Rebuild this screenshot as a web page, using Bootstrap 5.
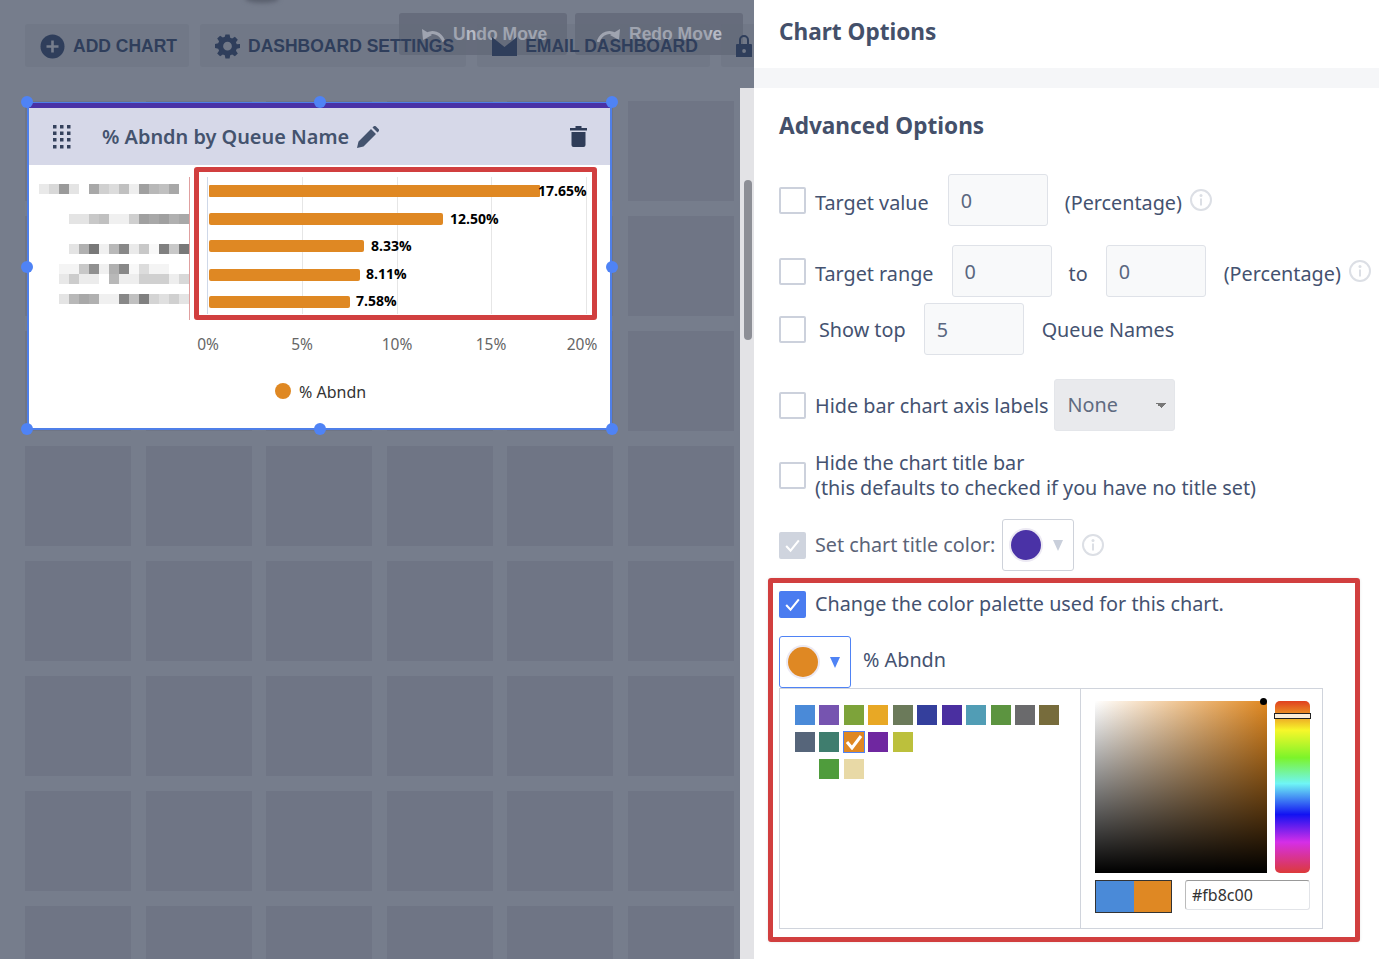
<!DOCTYPE html>
<html lang="en"><head><meta charset="utf-8"><title>Chart Options</title>
<link href="https://cdn.jsdelivr.net/npm/bootstrap@5.3.0/dist/css/bootstrap.min.css" rel="stylesheet">
<style>
html,body{height:959px;overflow:hidden}
body{font-family:"Noto Sans",sans-serif;color:#445270;background:#fff;font-size:19.8px}
.shell{height:959px}
.canvas-dim{width:754px;flex:none;background:#767d8c;position:relative;overflow:hidden}
.cell-grid{display:grid;grid-template-columns:repeat(6,106px);column-gap:14.6px;row-gap:15px;grid-auto-rows:100px;padding:101px 0 0 25px}
.cell-grid>div{background:#6f7585}
.top-smudge{position:absolute;left:245px;top:-6px;width:34px;height:9px;border-radius:50%;background:#5a606e;filter:blur(2px)}
.tool-row{position:absolute;left:25px;top:24px;display:flex;gap:11px;white-space:nowrap}
.tool-btn{height:43px;background:rgba(100,106,122,.28);border-radius:3px;display:flex;align-items:center;gap:8px;padding:1px 12px 0 15px;font:700 17.5px "Liberation Sans",sans-serif;color:#2f3e5b}
.tool-over{position:absolute;top:13px;height:42px;width:168px;background:#666c7c;border-radius:3px;display:flex;align-items:center;gap:8px;padding:0 0 0 22px;font:700 17.5px "Liberation Sans",sans-serif;color:#b6bac5;white-space:nowrap}
.track-side{position:absolute;right:0;top:88px;bottom:0;width:14px;background:#e3e3e6}
.track-thumb{position:absolute;left:4px;top:92px;width:8px;height:160px;border-radius:4px;background:#8d8f96}
.chart-box{position:absolute;left:27px;top:102px;width:585px;height:328px;background:#fff;border:2px solid #4f7fe8;border-top-width:1px}
.title-strip{height:5px;background:#4a32a6}
.chart-head{height:57px;background:#d6d8e8;display:flex;align-items:center;padding:0 23px 0 24px}
.chart-name{font-size:19.9px;font-weight:600;color:#44536e;margin-left:31px;margin-right:8px}
.red-mark{position:absolute;left:165px;top:64px;width:403px;height:153px;border:5px solid #d13f3f;border-radius:3px}
.handle{position:absolute;width:12px;height:12px;border-radius:50%;background:#4f83f5}
.side-panel{flex:1;min-width:0;background:#fff}
.panel-head{height:68px;padding:0 0 5px 25px;display:flex;align-items:center;font-size:22.6px;font-weight:700;color:#44506a}
.panel-gap{height:20px;background:#f5f6f8}
.panel-body{padding-left:25px}
.adv-title{font-size:22.6px;font-weight:700;line-height:32px;margin:22px 0 0;color:#44506a}
.opt-row{display:flex;align-items:center;white-space:nowrap}
.form-check-input.box-check{width:27px;height:27px;margin:0;border:2px solid #ccd1dc;border-radius:2px;flex:none}
.form-check-input.box-check:checked{background-color:#4a7cf0;border-color:#4a7cf0;background-image:url("data:image/svg+xml,%3csvg xmlns='http://www.w3.org/2000/svg' viewBox='0 0 20 20'%3e%3cpath fill='none' stroke='%23fff' stroke-width='1.8' d='M4.500 10.500l3.800 4L15.500 5.500'/%3e%3c/svg%3e")}
.form-check-input.box-check:disabled{opacity:1}
.form-check-input.box-check:checked:disabled{background-color:#cfd4de;border-color:#cfd4de}
.form-control.num-field{width:100px;height:52px;flex:none;border:1px solid #dfe2e8;border-radius:3px;background:#f8f9fa;font-size:19.8px;color:#5a6780;padding:0 12px}
.opt-text{line-height:28px;padding-top:5px}
.opt-text-b{line-height:28px;padding-top:1px}
.info-mark{width:22px;height:22px;flex:none}
.form-select.none-select{width:121px;height:52px;flex:none;margin-left:6px;font-size:19.8px;color:#5f6b80;border:1px solid #e4e6ea;border-radius:3px;background-color:#e9eaed;padding:0 12px;background-image:linear-gradient(45deg,transparent 50%,#777 50%),linear-gradient(-45deg,transparent 50%,#777 50%);background-size:5px 5px,5px 5px;background-position:right 13px center,right 8px center;background-repeat:no-repeat}
.swatch-btn{width:72px;height:52px;flex:none;border:1px solid #ced2da;border-radius:3px;background:#fff;display:flex;align-items:center;padding:0 0 0 8px;gap:12px}
.swatch-btn.active-btn{border-color:#4f83f5}
.dot-big{width:30px;height:30px;border-radius:50%;box-shadow:0 0 0 2px #ece9f3;flex:none}
.tri{width:0;height:0;border-left:5.5px solid transparent;border-right:5.5px solid transparent;border-top:11px solid #c9cfdb}
.tri.on{border-top-color:#4f83f5}
.red-wrap{margin:7px 0 0 -11px;width:592px;height:364px;border:5px solid #d13f3f;border-radius:3px;padding:7px 0 0 6px;box-shadow:0 0 3px rgba(0,0,0,.1)}
.picker-wrap{width:544px;height:241px;border:1px solid #d0d4dc;display:flex}
.pal-side{width:301px;border-right:1px solid #d0d4dc;padding:16px 0 0 15px;flex:none}
.pal-grid{display:grid;grid-template-columns:repeat(11,20px);column-gap:4.45px;row-gap:7px;grid-auto-rows:20px}
.pal-grid>i{display:block}
.pal-grid>i.pal-on{outline:1px solid #4f83f5;display:flex;align-items:center;justify-content:center}
.pick-side{padding:12px 0 0 14px;position:relative}
.sat-box{width:172px;height:172px;background:linear-gradient(to top,#000,rgba(0,0,0,0)),linear-gradient(to right,#fff,#e08820)}
.hue-bar{width:35px;height:172px;border-radius:5px;background:linear-gradient(to bottom,#e0401f 0%,#f7f72a 17%,#7cf42a 33%,#6ff5f5 48%,#1212f2 66%,#d52ee8 82%,#dc3a3a 100%);position:relative}
.hue-thumb{position:absolute;left:-1px;right:-1px;top:12px;height:6px;background:#fbeed9;border:1px solid #222}
.sat-dot{position:absolute;left:179px;top:9px;width:7px;height:7px;border-radius:50%;background:#000}
.prev-box{width:77px;height:33px;border:1px solid #333;display:flex}
.prev-box>i{flex:1}
.form-control.hex-field{width:125px;height:30px;border:1px solid #e2e4e8;border-top-color:#999;border-left-color:#bbb;border-radius:3px;font-size:16px;color:#333;padding:0 6px}
</style></head>
<body>
<div class="shell d-flex">
 <div class="canvas-dim">
  <div class="cell-grid">
   <div></div><div></div><div></div><div></div><div></div><div></div>
   <div></div><div></div><div></div><div></div><div></div><div></div>
   <div></div><div></div><div></div><div></div><div></div><div></div>
   <div></div><div></div><div></div><div></div><div></div><div></div>
   <div></div><div></div><div></div><div></div><div></div><div></div>
   <div></div><div></div><div></div><div></div><div></div><div></div>
   <div></div><div></div><div></div><div></div><div></div><div></div>
   <div></div><div></div><div></div><div></div><div></div><div></div>
  </div>
  <div class="top-smudge"></div>
  <div class="tool-over" style="left:399px"><svg width="24" height="15" viewBox="0 0 24 15"><path d="M23 15C20 6 11 3 5 8" fill="none" stroke="#b6bac5" stroke-width="3"/><path d="M1 2l1 11 9-5z" fill="#b6bac5"/></svg>Undo Move</div>
  <div class="tool-over" style="left:575px"><svg width="24" height="15" viewBox="0 0 24 15"><path d="M1 15C4 6 13 3 19 8" fill="none" stroke="#b6bac5" stroke-width="3"/><path d="M23 2l-1 11-9-5z" fill="#b6bac5"/></svg>Redo Move</div>
  <div class="tool-row">
   <div class="tool-btn"><svg width="25" height="25" viewBox="0 0 25 25"><circle cx="12.500" cy="12.500" r="12" fill="#2f3e5b"/><path d="M12.500 6.500v12M6.500 12.500h12" stroke="#767d8c" stroke-width="2.600"/></svg>ADD CHART</div>
   <div class="tool-btn"><svg width="25" height="26" viewBox="0 0 24 24"><path fill="#2f3e5b" fill-rule="evenodd" d="M10 1h4l.6 3.100 1.900.8 2.600-1.800 2.800 2.800-1.800 2.600.8 1.900L24 10v4l-3.100.6-.8 1.900 1.800 2.600-2.800 2.800-2.600-1.800-1.900.8L14 24h-4l-.6-3.100-1.900-.8-2.600 1.800-2.800-2.800 1.800-2.600-.8-1.900L0 14v-4l3.100-.6.8-1.900-1.800-2.600 2.800-2.800 2.600 1.800 1.900-.8zM12 8a4.200 4.200 0 1 0 0 8.400A4.200 4.200 0 0 0 12 8z"/></svg>DASHBOARD SETTINGS</div>
   <div class="tool-btn"><svg width="25" height="19" viewBox="0 0 25 19"><path fill="#2f3e5b" d="M0 0l12.500 10L25 0v19H0z"/></svg>EMAIL DASHBOARD</div>
   <div class="tool-btn"><svg width="16" height="24" viewBox="0 0 16 24"><path fill="#2f3e5b" fill-rule="evenodd" d="M3 10V6a5 5 0 0 1 10 0v4h2a1 1 0 0 1 1 1v12H0V11a1 1 0 0 1 1-1zm2 0h6V6a3 3 0 0 0-6 0zm3 5a2 2 0 1 0 0 4 2 2 0 0 0 0-4z"/></svg></div>
  </div>
  <div class="track-side"><div class="track-thumb"></div></div>

  <div class="chart-box">
   <div class="title-strip"></div>
   <div class="chart-head">
    <svg width="18" height="24" viewBox="0 0 18 24" fill="#34415c"><rect x="0" y="0" width="3.500" height="3.500"/><rect x="7" y="0" width="3.500" height="3.500"/><rect x="14" y="0" width="3.500" height="3.500"/><rect x="0" y="6.500" width="3.500" height="3.500"/><rect x="7" y="6.500" width="3.500" height="3.500"/><rect x="14" y="6.500" width="3.500" height="3.500"/><rect x="0" y="13" width="3.500" height="3.500"/><rect x="7" y="13" width="3.500" height="3.500"/><rect x="14" y="13" width="3.500" height="3.500"/><rect x="0" y="20" width="3.500" height="3.500"/><rect x="7" y="20" width="3.500" height="3.500"/><rect x="14" y="20" width="3.500" height="3.500"/></svg>
    <span class="chart-name">% Abndn by Queue Name</span>
    <svg width="22" height="22" viewBox="0 0 22 22"><path fill="#44536e" d="M0 22l1.500-6.500L14 3l5 5L6.500 20.500zM15.500 1.500l1-1a1.800 1.800 0 0 1 2.500 0l2.500 2.500a1.800 1.800 0 0 1 0 2.500l-1 1z"/></svg>
    <svg class="ms-auto" width="17" height="21" viewBox="0 0 17 21"><path fill="#2f3c58" d="M0 2h5.500V0h6v2H17v2.500H0zM1.500 6h14v13a2 2 0 0 1-2 2h-10a2 2 0 0 1-2-2z"/></svg>
   </div>
   <svg width="581" height="265" viewBox="29 165 581 265" style="display:block">
    <g id="blur-labels">
     <rect x="39" y="184" width="10" height="10" fill="#e9e9e9"/><rect x="49" y="184" width="10" height="10" fill="#d8d8d8"/><rect x="59" y="184" width="10" height="10" fill="#9a9a9a"/><rect x="69" y="184" width="10" height="10" fill="#e4e4e4"/><rect x="89" y="184" width="10" height="10" fill="#a8a8a8"/><rect x="99" y="184" width="10" height="10" fill="#d0d0d0"/><rect x="109" y="184" width="10" height="10" fill="#dcdcdc"/><rect x="119" y="184" width="10" height="10" fill="#c0c0c0"/><rect x="129" y="184" width="10" height="10" fill="#eeeeee"/><rect x="139" y="184" width="10" height="10" fill="#a0a0a0"/><rect x="149" y="184" width="10" height="10" fill="#b8b8b8"/><rect x="159" y="184" width="10" height="10" fill="#c0c0c0"/><rect x="169" y="184" width="10" height="10" fill="#a8a8a8"/>
     <rect x="69" y="214" width="10" height="10" fill="#e4e4e4"/><rect x="79" y="214" width="10" height="10" fill="#e4e4e4"/><rect x="89" y="214" width="10" height="10" fill="#c8c8c8"/><rect x="99" y="214" width="10" height="10" fill="#c0c0c0"/><rect x="109" y="214" width="10" height="10" fill="#f0f0f0"/><rect x="119" y="214" width="10" height="10" fill="#f0f0f0"/><rect x="129" y="214" width="10" height="10" fill="#cfcfcf"/><rect x="139" y="214" width="10" height="10" fill="#a0a0a0"/><rect x="149" y="214" width="10" height="10" fill="#a8a8a8"/><rect x="159" y="214" width="10" height="10" fill="#a0a0a0"/><rect x="169" y="214" width="10" height="10" fill="#b0b0b0"/><rect x="179" y="214" width="10" height="10" fill="#a8a8a8"/>
     <rect x="69" y="244" width="10" height="10" fill="#e4e4e4"/><rect x="79" y="244" width="10" height="10" fill="#b0b0b0"/><rect x="89" y="244" width="10" height="10" fill="#787878"/><rect x="99" y="244" width="10" height="10" fill="#f0f0f0"/><rect x="109" y="244" width="10" height="10" fill="#b8b8b8"/><rect x="119" y="244" width="10" height="10" fill="#888888"/><rect x="129" y="244" width="10" height="10" fill="#eaeaea"/><rect x="139" y="244" width="10" height="10" fill="#c8c8c8"/><rect x="149" y="244" width="10" height="10" fill="#f8f8f8"/><rect x="159" y="244" width="10" height="10" fill="#808080"/><rect x="169" y="244" width="10" height="10" fill="#c8c8c8"/><rect x="179" y="244" width="10" height="10" fill="#787878"/>
     <rect x="59" y="264" width="10" height="10" fill="#f4f4f4"/><rect x="69" y="264" width="10" height="10" fill="#f4f4f4"/><rect x="79" y="264" width="10" height="10" fill="#c8c8c8"/><rect x="89" y="264" width="10" height="10" fill="#909090"/><rect x="99" y="264" width="10" height="10" fill="#f0f0f0"/><rect x="109" y="264" width="10" height="10" fill="#b0b0b0"/><rect x="119" y="264" width="10" height="10" fill="#888888"/><rect x="129" y="264" width="10" height="10" fill="#f8f8f8"/><rect x="139" y="264" width="10" height="10" fill="#dcdcdc"/><rect x="149" y="264" width="10" height="10" fill="#f4f4f4"/><rect x="159" y="264" width="10" height="10" fill="#f4f4f4"/>
     <rect x="59" y="274" width="10" height="10" fill="#e8e8e8"/><rect x="69" y="274" width="10" height="10" fill="#cccccc"/><rect x="79" y="274" width="10" height="10" fill="#ececec"/><rect x="89" y="274" width="10" height="10" fill="#ececec"/><rect x="109" y="274" width="10" height="10" fill="#b8b8b8"/><rect x="119" y="274" width="10" height="10" fill="#eeeeee"/><rect x="129" y="274" width="10" height="10" fill="#eeeeee"/><rect x="139" y="274" width="10" height="10" fill="#d0d0d0"/><rect x="149" y="274" width="10" height="10" fill="#d0d0d0"/><rect x="159" y="274" width="10" height="10" fill="#d0d0d0"/><rect x="169" y="274" width="10" height="10" fill="#eeeeee"/><rect x="179" y="274" width="10" height="10" fill="#d8d8d8"/>
     <rect x="59" y="294" width="10" height="10" fill="#e4e4e4"/><rect x="69" y="294" width="10" height="10" fill="#b8b8b8"/><rect x="79" y="294" width="10" height="10" fill="#a8a8a8"/><rect x="89" y="294" width="10" height="10" fill="#b0b0b0"/><rect x="99" y="294" width="10" height="10" fill="#f0f0f0"/><rect x="109" y="294" width="10" height="10" fill="#f0f0f0"/><rect x="119" y="294" width="10" height="10" fill="#888888"/><rect x="129" y="294" width="10" height="10" fill="#c0c0c0"/><rect x="139" y="294" width="10" height="10" fill="#808080"/><rect x="149" y="294" width="10" height="10" fill="#d4d4d4"/><rect x="159" y="294" width="10" height="10" fill="#e0e0e0"/><rect x="169" y="294" width="10" height="10" fill="#d0d0d0"/><rect x="179" y="294" width="10" height="10" fill="#e4e4e4"/>
    </g>
    <path d="M189.500 177V320" stroke="#e0a0a0"/>
    <path d="M207.500 177V314" stroke="#cfd8e8"/>
    <path d="M302.500 177V314M397.500 177V314M491.500 177V314M586.500 177V314" stroke="#e6e6e6"/>
    <g fill="#df8823">
     <rect x="209" y="185" width="331" height="12" rx="1"/><rect x="209" y="213" width="234" height="12" rx="2"/><rect x="209" y="240" width="155" height="12" rx="2"/><rect x="209" y="269" width="151" height="12" rx="2"/><rect x="209" y="296" width="141" height="12" rx="2"/>
    </g>
    <g font-family="Open Sans,sans-serif" font-size="14" font-weight="700" fill="#000">
     <text x="538" y="196">17.65%</text><text x="450" y="224">12.50%</text><text x="371" y="251">8.33%</text><text x="366" y="279">8.11%</text><text x="356" y="306">7.58%</text>
    </g>
    <g font-family="Noto Sans,sans-serif" font-size="15.500" fill="#666" text-anchor="middle">
     <text x="208" y="350">0%</text><text x="302" y="350">5%</text><text x="397" y="350">10%</text><text x="491" y="350">15%</text><text x="582" y="350">20%</text>
    </g>
    <circle cx="283" cy="391" r="8" fill="#df8823"/>
    <text x="299" y="398" font-family="Noto Sans,sans-serif" font-size="16" fill="#333">% Abndn</text>
   </svg>
   <div class="red-mark"></div>
  </div>
  <div class="handle" style="left:21px;top:96px"></div><div class="handle" style="left:314px;top:96px"></div><div class="handle" style="left:606px;top:96px"></div>
  <div class="handle" style="left:21px;top:261px"></div><div class="handle" style="left:606px;top:261px"></div>
  <div class="handle" style="left:21px;top:423px"></div><div class="handle" style="left:314px;top:423px"></div><div class="handle" style="left:606px;top:423px"></div>
 </div>

 <div class="side-panel">
  <div class="panel-head">Chart Options</div>
  <div class="panel-gap"></div>
  <div class="panel-body">
   <h2 class="adv-title">Advanced Options</h2>

   <div class="opt-row" style="margin-top:32px">
    <input class="form-check-input box-check" type="checkbox">
    <span class="opt-text" style="margin-left:9px">Target value</span>
    <input class="form-control num-field" style="margin-left:19px" value="0">
    <span class="opt-text" style="margin-left:17px">(Percentage)</span>
    <svg class="info-mark ms-2" viewBox="0 0 22 22"><circle cx="11" cy="11" r="10" fill="none" stroke="#dcdfe5" stroke-width="2"/><circle cx="11" cy="6.500" r="1.500" fill="#dcdfe5"/><path d="M11 9.500v7" stroke="#dcdfe5" stroke-width="2"/></svg>
   </div>
   <div class="opt-row" style="margin-top:19px">
    <input class="form-check-input box-check" type="checkbox">
    <span class="opt-text" style="margin-left:9px">Target range</span>
    <input class="form-control num-field" style="margin-left:18px" value="0">
    <span class="opt-text" style="margin-left:17px">to</span>
    <input class="form-control num-field" style="margin-left:18px" value="0">
    <span class="opt-text" style="margin-left:18px">(Percentage)</span>
    <svg class="info-mark ms-2" viewBox="0 0 22 22"><circle cx="11" cy="11" r="10" fill="none" stroke="#dcdfe5" stroke-width="2"/><circle cx="11" cy="6.500" r="1.500" fill="#dcdfe5"/><path d="M11 9.500v7" stroke="#dcdfe5" stroke-width="2"/></svg>
   </div>
   <div class="opt-row" style="margin-top:6px">
    <input class="form-check-input box-check" type="checkbox">
    <span class="opt-text-b" style="margin-left:13px">Show top</span>
    <input class="form-control num-field" style="margin-left:18px" value="5">
    <span class="opt-text-b" style="margin-left:18px">Queue Names</span>
   </div>
   <div class="opt-row" style="margin-top:24px">
    <input class="form-check-input box-check" type="checkbox">
    <span class="opt-text-b" style="margin-left:9px">Hide bar chart axis labels</span>
    <select class="form-select none-select" disabled><option>None</option></select>
   </div>
   <div class="opt-row" style="margin-top:19px">
    <input class="form-check-input box-check" type="checkbox">
    <span style="line-height:25px;margin-left:9px">Hide the chart title bar<br>(this defaults to checked if you have no title set)</span>
   </div>
   <div class="opt-row" style="margin-top:19px">
    <input class="form-check-input box-check" type="checkbox" checked disabled>
    <span style="line-height:28px;margin-left:9px;color:#5b6478">Set chart title color:</span>
    <div class="swatch-btn" style="margin-left:7px"><span class="dot-big" style="background:#4a32a6"></span><span class="tri"></span></div>
    <svg class="info-mark ms-2" viewBox="0 0 22 22"><circle cx="11" cy="11" r="10" fill="none" stroke="#dcdfe5" stroke-width="2"/><circle cx="11" cy="6.500" r="1.500" fill="#dcdfe5"/><path d="M11 9.500v7" stroke="#dcdfe5" stroke-width="2"/></svg>
   </div>

   <div class="red-wrap">
    <div class="opt-row">
     <input class="form-check-input box-check" type="checkbox" checked>
     <span style="line-height:28px;margin-left:9px">Change the color palette used for this chart.</span>
    </div>
    <div class="opt-row" style="margin-top:18px">
     <div class="swatch-btn active-btn"><span class="dot-big" style="background:#df8823"></span><span class="tri on"></span></div>
     <span style="margin-left:12px;line-height:28px;margin-bottom:4px">% Abndn</span>
    </div>
    <div class="picker-wrap">
     <div class="pal-side">
      <div class="pal-grid">
       <i style="background:#4a8ad8"></i><i style="background:#7654b0"></i><i style="background:#7da33a"></i><i style="background:#e8a825"></i><i style="background:#6b7a5a"></i><i style="background:#343f9c"></i><i style="background:#4a2fa0"></i><i style="background:#519db5"></i><i style="background:#5c9440"></i><i style="background:#6a6a6c"></i><i style="background:#776c3c"></i>
       <i style="background:#56657a"></i><i style="background:#3f7d6e"></i><i class="pal-on" style="background:#df8823"><svg width="18" height="16" viewBox="0 0 18 16"><path d="M2 8l5 6L16 2" fill="none" stroke="#fff" stroke-width="3"/></svg></i><i style="background:#6f27a0"></i><i style="background:#bcc03c"></i><i></i><i></i><i></i><i></i><i></i><i></i>
       <i></i><i style="background:#4f9c3c"></i><i style="background:#e8d9a6"></i>
      </div>
     </div>
     <div class="pick-side">
      <div class="d-flex" style="gap:8px">
       <div class="sat-box"></div>
       <div class="hue-bar"><div class="hue-thumb"></div></div>
      </div>
      <div class="sat-dot"></div>
      <div class="d-flex" style="margin-top:7px;gap:13px">
       <div class="prev-box"><i style="background:#4a8ad8"></i><i style="background:#df8823"></i></div>
       <input class="form-control hex-field" value="#fb8c00">
      </div>
     </div>
    </div>
   </div>
  </div>
 </div>
</div>
</body></html>
